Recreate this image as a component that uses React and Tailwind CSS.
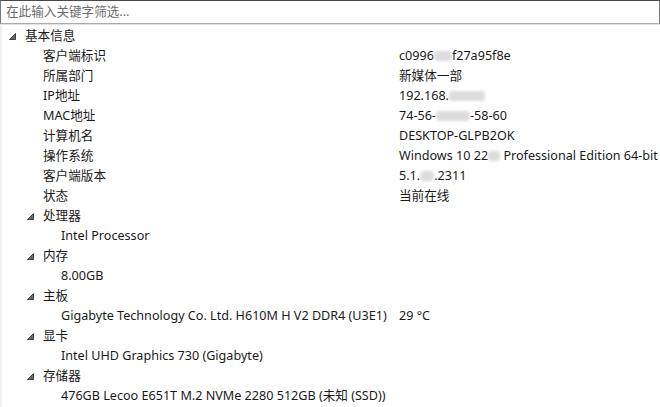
const ROWS = [
    {level: 0, label: "基本信息", group: true},
    {level: 1, label: "客户端标识", value: ["c0996", "blur:18", "f27a95f8e"]},
    {level: 1, label: "所属部门", value: ["新媒体一部"]},
    {level: 1, label: "IP地址", value: ["192.168.", "blur:36"]},
    {level: 1, label: "MAC地址", value: ["74-56-", "blur:34", "-58-60"]},
    {level: 1, label: "计算机名", value: ["DESKTOP-GLPB2OK"]},
    {level: 1, label: "操作系统", value: ["Windows 10 22", "blur:12", " Professional Edition 64-bit"]},
    {level: 1, label: "客户端版本", value: ["5.1.", "blur:14", ".2311"]},
    {level: 1, label: "状态", value: ["当前在线"]},
    {level: 1, label: "处理器", group: true},
    {level: 2, label: "Intel Processor"},
    {level: 1, label: "内存", group: true},
    {level: 2, label: "8.00GB"},
    {level: 1, label: "主板", group: true},
    {level: 2, label: "Gigabyte Technology Co. Ltd. H610M H V2 DDR4 (U3E1)", value: ["29 °C"]},
    {level: 1, label: "显卡", group: true},
    {level: 2, label: "Intel UHD Graphics 730 (Gigabyte)"},
    {level: 1, label: "存储器", group: true},
    {level: 2, label: "476GB Lecoo E651T M.2 NVMe 2280 512GB (未知 (SSD))"},
]

const INDENT = ["pl-[25px]", "pl-[43px]", "pl-[61px]"]
const ARROW = ["left-[7px]", "left-[25px]", "left-[43px]"]

function Expander() {
    return (
        <svg width="7" height="7" viewBox="0 0 7 7" className="block">
            <polygon points="6.5,0.5 6.5,6.5 0.5,6.5" fill="#666666" stroke="#404040" strokeWidth="1"/>
        </svg>
    )
}

function Value({parts}) {
    return (
        <span className="whitespace-pre">
            {parts.map((p, i) =>
                p.startsWith("blur:") ? (
                    <span key={i}
                          className="inline-block align-middle h-[10px] bg-[#dcdcdc] blur-[1.5px] rounded-sm"
                          style={{width: Number(p.slice(5))}}/>
                ) : (
                    <span key={i}>{p}</span>
                )
            )}
        </span>
    )
}

export default function App() {
    return (
        <div className="w-[660px] h-[407px] bg-white overflow-hidden text-[12.6px] text-[#1a1a1a]"
             style={{fontFamily: '"Noto Sans", "Noto Sans CJK SC", sans-serif'}}>
            <div className="h-[24px] border border-[#7a7a7a] border-t-[#4a4a4a] border-b-[#ababab] flex items-center px-[5px] text-[#6d6d6d]">
                在此输入关键字筛选...
            </div>
            <div className="h-px bg-[#e3e3e3]"/>
            <div className="flex h-full">
                <div className="w-[2px] bg-[#f0f0f0] shrink-0"/>
                <div className="flex-1 flex flex-col pt-[1px]">
                    {ROWS.map((r, i) => (
                        <div key={i} className="relative h-[20px] flex items-center">
                            {r.group && (
                                <span className={`absolute ${ARROW[r.level]} top-[7px]`}><Expander/></span>
                            )}
                            <div className={`${INDENT[r.level]} w-[399px] shrink-0 whitespace-nowrap -ml-[2px]`}>
                                {r.label}
                            </div>
                            {r.value && <Value parts={r.value}/>}
                        </div>
                    ))}
                </div>
            </div>
        </div>
    )
}
